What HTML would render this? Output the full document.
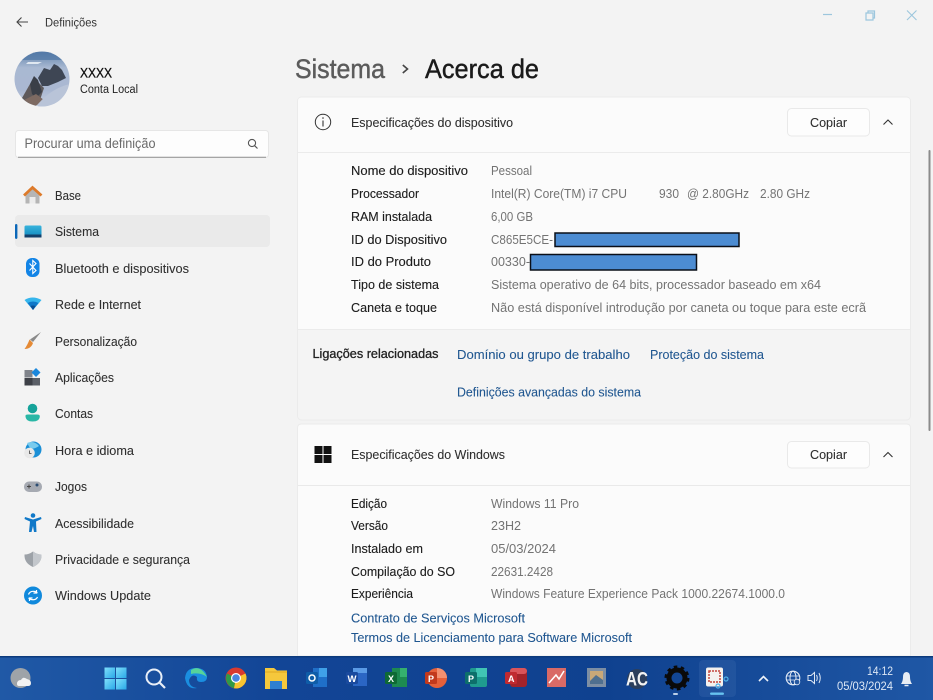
<!DOCTYPE html>
<html lang="pt"><head><meta charset="utf-8"><title>Definições</title>
<style>
html,body{margin:0;padding:0;background:#f3f3f3}
svg{display:block;width:933px;height:700px;filter:blur(.35px)}
text{font-family:"Liberation Sans",sans-serif;font-size:13px;fill:#2a2a2a}
.l{fill:#1c1c1c;stroke:#1c1c1c;stroke-width:.12}.v{fill:#737373}.a{fill:#1f5690;stroke:#1f5690;stroke-width:.08}.n{fill:#2e2e2e;stroke:#2e2e2e;stroke-width:.08}
</style></head><body>
<svg xmlns="http://www.w3.org/2000/svg" viewBox="0 0 933 700" width="933" height="700">
<defs>
<linearGradient id="tb" x1="0" x2="1" y1="0" y2="0"><stop offset="0" stop-color="#2059a6"/><stop offset=".3" stop-color="#124596"/><stop offset=".65" stop-color="#0f418f"/><stop offset="1" stop-color="#1f57a5"/></linearGradient>
<linearGradient id="sky" x1="0" x2="0" y1="0" y2="1"><stop offset="0" stop-color="#5c7fa9"/><stop offset=".3" stop-color="#a9b9d2"/><stop offset=".7" stop-color="#aab8d2"/><stop offset="1" stop-color="#c5cfe0"/></linearGradient>
<linearGradient id="scr" x1="0" x2="0" y1="0" y2="1"><stop offset="0" stop-color="#38b4dc"/><stop offset="1" stop-color="#0e86bd"/></linearGradient>
<linearGradient id="win" x1="0" x2="1" y1="0" y2="1"><stop offset="0" stop-color="#7fe0fb"/><stop offset="1" stop-color="#2aa8e8"/></linearGradient>
<clipPath id="av"><circle cx="42" cy="79" r="27.5"/></clipPath>
</defs>
<rect width="933" height="700" fill="#f3f3f3"/>

<!-- title bar -->
<path d="M28 22H17M21.500 17.500L17 22L21.500 26.500" fill="none" stroke="#444" stroke-width="1.100"/>
<text x="45" y="26.500" textLength="52" lengthAdjust="spacingAndGlyphs" style="font-size:11.500px;fill:#333">Definições</text>
<path d="M823 14.500H832" stroke="#9cc6dd" stroke-width="1.200"/>
<path d="M866 13h7v7h-7zM868 13v-2h6.500v7h-1.500" fill="none" stroke="#9cc6dd" stroke-width="1.200"/>
<path d="M907 10.500l9.500 9.500M916.500 10.500l-9.500 9.500" stroke="#9cc6dd" stroke-width="1.100"/>

<!-- profile -->
<g clip-path="url(#av)">
<rect x="14" y="51" width="56" height="56" fill="url(#sky)"/>
<path d="M14 60H70V52H14Z" fill="#4f76a5" opacity=".7"/>
<path d="M28 62H42L38 64H26Z" fill="#dfe7f0"/>
<path d="M38 78L44 68L50 70L54 64L58 66L62 70L66 78L58 82L48 86L42 86Z" fill="#3e4654"/>
<path d="M22 98L30 84L36 80L44 88L40 100L26 104Z" fill="#5e5a5c"/>
<path d="M30 84L34 76L38 80L42 92L36 98L32 94Z" fill="#3a3f48"/>
<path d="M24 100L36 94L44 100L34 107Z" fill="#7d6a62"/>
<path d="M38 104Q52 88 70 84V107H38Z" fill="#b9c4d8"/>
</g>
<text x="80" y="77.500" textLength="32" lengthAdjust="spacingAndGlyphs" style="font-size:14px;fill:#111;stroke:#111;stroke-width:.3">XXXX</text>
<text x="80" y="93" textLength="58" lengthAdjust="spacingAndGlyphs" style="font-size:11.500px;fill:#222">Conta Local</text>

<!-- search -->
<rect x="15.500" y="130.500" width="253" height="27" rx="3" fill="#fdfdfd" stroke="#e6e6e6"/>
<path d="M18 157.300H266" stroke="#8f8f8f" stroke-width="1"/>
<text x="24.500" y="148" textLength="131" lengthAdjust="spacingAndGlyphs" style="font-size:13.500px;fill:#6a6a6a">Procurar uma definição</text>
<circle cx="252" cy="143" r="3.600" fill="none" stroke="#555" stroke-width="1.100"/><path d="M254.600 145.700L257.500 148.500" stroke="#555" stroke-width="1.200"/>

<!-- nav -->
<rect x="15" y="215" width="255" height="32" rx="4" fill="#eaeaea"/>
<rect x="15" y="224" width="2.400" height="15" rx="1.200" fill="#0b67b8"/>
<text class="n" x="55" y="200" textLength="26" lengthAdjust="spacingAndGlyphs">Base</text>
<text class="n" x="55" y="236" textLength="44" lengthAdjust="spacingAndGlyphs">Sistema</text>
<text class="n" x="55" y="273" textLength="134" lengthAdjust="spacingAndGlyphs">Bluetooth e dispositivos</text>
<text class="n" x="55" y="309" textLength="86" lengthAdjust="spacingAndGlyphs">Rede e Internet</text>
<text class="n" x="55" y="346" textLength="82" lengthAdjust="spacingAndGlyphs">Personalização</text>
<text class="n" x="55" y="382" textLength="59" lengthAdjust="spacingAndGlyphs">Aplicações</text>
<text class="n" x="55" y="418" textLength="38" lengthAdjust="spacingAndGlyphs">Contas</text>
<text class="n" x="55" y="455" textLength="79" lengthAdjust="spacingAndGlyphs">Hora e idioma</text>
<text class="n" x="55" y="491" textLength="32" lengthAdjust="spacingAndGlyphs">Jogos</text>
<text class="n" x="55" y="528" textLength="79" lengthAdjust="spacingAndGlyphs">Acessibilidade</text>
<text class="n" x="55" y="564" textLength="135" lengthAdjust="spacingAndGlyphs">Privacidade e segurança</text>
<text class="n" x="55" y="600" textLength="96" lengthAdjust="spacingAndGlyphs">Windows Update</text>
<!-- nav icons -->
<path d="M25.500 194L32.500 188L39.500 194V203.500H25.500Z" fill="#b5b5b5"/><path d="M29.500 197H35.500V203.500H29.500Z" fill="#ececec"/>
<path d="M24 195.500L32.500 187.500L41.500 195.500" fill="none" stroke="#dd7a2a" stroke-width="2.800"/>
<rect x="24.500" y="225.500" width="17" height="12" rx="1.500" fill="url(#scr)"/><rect x="24.500" y="234.500" width="17" height="3" fill="#123f6a"/>
<rect x="26" y="258" width="13.500" height="19" rx="6" fill="#1284e6"/><path d="M29.500 263.500L36 270.500L32.800 273.500V260.500L36 263.500L29.500 270.500" fill="none" stroke="#fff" stroke-width="1.100"/>
<path d="M24.500 300Q32.500 295 41.500 300L33 310Z" fill="#35b5ec"/><path d="M27.500 303Q33 300 38.500 303L33 310Z" fill="#0f78c8"/><path d="M30.500 306Q33 305 35.500 306L33 310Z" fill="#0b4d91"/>
<path d="M41 332L33 342L30 339.500Z" fill="#8a8a8a"/><path d="M29.500 339.500L33 343Q31 349 24.500 349Q27.500 345 29.500 339.500Z" fill="#e58a35"/>
<rect x="24.500" y="370" width="8" height="7.500" fill="#80848b"/><rect x="24.500" y="378" width="8" height="7.500" fill="#3d4047"/><rect x="32.500" y="378" width="7.500" height="7.500" fill="#5c6068"/><path d="M36 368L40.500 372.500L36 377L31.500 372.500Z" fill="#1b87dc"/>
<circle cx="32.500" cy="408.500" r="4.800" fill="#15a39a"/><path d="M25.500 416.500Q25 414.500 28 414.500H37Q40 414.500 39.800 416.500Q39.500 421.500 32.500 421.500Q26 421.500 25.500 416.500Z" fill="#2ab7a6"/>
<circle cx="33.500" cy="449.500" r="8" fill="#1b8fd6"/><path d="M27 443Q34 440 39 446Q33 450 30 448Z" fill="#79cbee"/><circle cx="29.500" cy="453" r="5.300" fill="#e8e8e8"/><path d="M29.500 450.500V453.500H31.500" fill="none" stroke="#444" stroke-width=".8"/>
<rect x="24" y="481.500" width="18" height="10.500" rx="5" fill="#a6aab2"/><circle cx="37" cy="485" r="1.500" fill="#2c4d73"/><path d="M27 486.500H31M29 484.500V488.500" stroke="#444" stroke-width="1"/>
<g fill="#0f78c8"><circle cx="33" cy="515.500" r="2.300"/><path d="M25 517L33 519.500L41 517L41.500 519L36 521.500L36.500 532H34L33 526L31.500 532H29L30 521.500L24.500 519Z"/></g>
<path d="M33 551.500Q37 554.500 41.500 554.500Q42 563 33 567Q24 563 24.500 554.500Q29 554.500 33 551.500Z" fill="#9da2a8"/><path d="M33 551.500Q37 554.500 41.500 554.500Q42 563 33 567Z" fill="#c3c7cc"/>
<circle cx="33" cy="595.500" r="9" fill="#1089dc"/><path d="M28.500 594.500Q30 590.500 35 591.500L37.500 593M36.500 590V593H33.500M37.500 597Q36 600.500 31 599.500L28.500 598M29.500 601V598H32.500" fill="none" stroke="#fff" stroke-width="1.200"/>

<!-- heading -->
<text x="295" y="78" textLength="90" lengthAdjust="spacingAndGlyphs" style="font-size:27px;fill:#5b5b5b;stroke:#5b5b5b;stroke-width:.45">Sistema</text>
<path d="M402.800 65L407.500 69L402.800 73" fill="none" stroke="#444" stroke-width="1.600"/>
<text x="425" y="78" textLength="114" lengthAdjust="spacingAndGlyphs" style="font-size:27px;fill:#1a1a1a;stroke:#1a1a1a;stroke-width:.45">Acerca de</text>

<!-- card 1 -->
<rect x="297.500" y="97" width="613" height="323" rx="4" fill="#f4f4f4" stroke="#ebebeb"/>
<path d="M298 329V101Q298 97.500 302 97.500H906Q910 97.500 910 101V329Z" fill="#fbfbfb"/>
<path d="M298 152.500H910" stroke="#ebebeb"/>
<path d="M298 329.500H910" stroke="#ebebeb"/>
<circle cx="323" cy="122" r="7.700" fill="none" stroke="#333" stroke-width="1"/>
<path d="M323 120.500V126.500" stroke="#333" stroke-width="1.100"/><circle cx="323" cy="118" r=".8" fill="#333"/>
<text class="n" x="351" y="127" textLength="162" lengthAdjust="spacingAndGlyphs">Especificações do dispositivo</text>
<rect x="787.500" y="108.500" width="82" height="27.500" rx="4" fill="#fdfdfd" stroke="#e9e9e9"/>
<text class="n" x="810" y="127" textLength="37" lengthAdjust="spacingAndGlyphs">Copiar</text>
<path d="M883.500 124.500L888 120L892.500 124.500" fill="none" stroke="#333" stroke-width="1.100"/>

<text class="l" x="351" y="175" textLength="117" lengthAdjust="spacingAndGlyphs">Nome do dispositivo</text>
<text class="l" x="351" y="198" textLength="68" lengthAdjust="spacingAndGlyphs">Processador</text>
<text class="l" x="351" y="221" textLength="81" lengthAdjust="spacingAndGlyphs">RAM instalada</text>
<text class="l" x="351" y="244" textLength="96" lengthAdjust="spacingAndGlyphs">ID do Dispositivo</text>
<text class="l" x="351" y="266" textLength="80" lengthAdjust="spacingAndGlyphs">ID do Produto</text>
<text class="l" x="351" y="289" textLength="88" lengthAdjust="spacingAndGlyphs">Tipo de sistema</text>
<text class="l" x="351" y="312" textLength="86" lengthAdjust="spacingAndGlyphs">Caneta e toque</text>
<text class="v" x="491" y="175" textLength="41" lengthAdjust="spacingAndGlyphs">Pessoal</text>
<text class="v" x="491" y="198" textLength="136" lengthAdjust="spacingAndGlyphs">Intel(R) Core(TM) i7 CPU</text>
<text class="v" x="659" y="198" textLength="20" lengthAdjust="spacingAndGlyphs">930</text>
<text class="v" x="687" y="198" textLength="62" lengthAdjust="spacingAndGlyphs">@ 2.80GHz</text>
<text class="v" x="760" y="198" textLength="50" lengthAdjust="spacingAndGlyphs">2.80 GHz</text>
<text class="v" x="491" y="221" textLength="42" lengthAdjust="spacingAndGlyphs">6,00 GB</text>
<text class="v" x="491" y="244" textLength="62" lengthAdjust="spacingAndGlyphs">C865E5CE-</text>
<text class="v" x="491" y="266" textLength="39" lengthAdjust="spacingAndGlyphs">00330-</text>
<text class="v" x="491" y="289" textLength="330" lengthAdjust="spacingAndGlyphs">Sistema operativo de 64 bits, processador baseado em x64</text>
<text class="v" x="491" y="312" textLength="375" lengthAdjust="spacingAndGlyphs">Não está disponível introdução por caneta ou toque para este ecrã</text>
<rect x="555" y="233" width="184" height="13.500" fill="#4c8cd2" stroke="#0a0f18" stroke-width="1.500"/>
<rect x="530.500" y="254.500" width="166" height="15.500" fill="#4c8cd2" stroke="#0a0f18" stroke-width="1.500"/>

<text x="312.500" y="358" textLength="126" lengthAdjust="spacingAndGlyphs" style="fill:#222;stroke:#222;stroke-width:.3">Ligações relacionadas</text>
<text class="a" x="457" y="359" textLength="173" lengthAdjust="spacingAndGlyphs">Domínio ou grupo de trabalho</text>
<text class="a" x="650" y="359" textLength="114" lengthAdjust="spacingAndGlyphs">Proteção do sistema</text>
<text class="a" x="457" y="396.500" textLength="184" lengthAdjust="spacingAndGlyphs">Definições avançadas do sistema</text>

<!-- card 2 -->
<path d="M297.500 656V428Q297.500 424 301.500 424H906.500Q910.500 424 910.500 428V656Z" fill="#fbfbfb" stroke="#ebebeb"/>
<path d="M298 485.500H910" stroke="#e9e9e9"/>
<g fill="#111"><rect x="314.500" y="446" width="8" height="8"/><rect x="323.500" y="446" width="8" height="8"/><rect x="314.500" y="455" width="8" height="8"/><rect x="323.500" y="455" width="8" height="8"/></g>
<text class="n" x="351" y="459" textLength="154" lengthAdjust="spacingAndGlyphs">Especificações do Windows</text>
<rect x="787.500" y="441.500" width="82" height="26.500" rx="4" fill="#fdfdfd" stroke="#e9e9e9"/>
<text class="n" x="810" y="459" textLength="37" lengthAdjust="spacingAndGlyphs">Copiar</text>
<path d="M883.500 457L888 452.500L892.500 457" fill="none" stroke="#333" stroke-width="1.100"/>

<text class="l" x="351" y="508" textLength="36" lengthAdjust="spacingAndGlyphs">Edição</text>
<text class="l" x="351" y="530" textLength="37" lengthAdjust="spacingAndGlyphs">Versão</text>
<text class="l" x="351" y="553" textLength="72" lengthAdjust="spacingAndGlyphs">Instalado em</text>
<text class="l" x="351" y="576" textLength="104" lengthAdjust="spacingAndGlyphs">Compilação do SO</text>
<text class="l" x="351" y="598" textLength="62" lengthAdjust="spacingAndGlyphs">Experiência</text>
<text class="v" x="491" y="508" textLength="88" lengthAdjust="spacingAndGlyphs">Windows 11 Pro</text>
<text class="v" x="491" y="530" textLength="30" lengthAdjust="spacingAndGlyphs">23H2</text>
<text class="v" x="491" y="553" textLength="65" lengthAdjust="spacingAndGlyphs">05/03/2024</text>
<text class="v" x="491" y="576" textLength="62" lengthAdjust="spacingAndGlyphs">22631.2428</text>
<text class="v" x="491" y="598" textLength="294" lengthAdjust="spacingAndGlyphs">Windows Feature Experience Pack 1000.22674.1000.0</text>
<text class="a" x="351" y="622.500" textLength="174" lengthAdjust="spacingAndGlyphs">Contrato de Serviços Microsoft</text>
<text class="a" x="351" y="642" textLength="281" lengthAdjust="spacingAndGlyphs">Termos de Licenciamento para Software Microsoft</text>

<!-- scrollbar -->
<rect x="928.500" y="150" width="2" height="281" rx="1" fill="#8b8b8b"/>

<!-- taskbar -->
<rect y="656" width="933" height="44" fill="url(#tb)"/>
<rect y="656" width="933" height="1.500" fill="#0c3a7c"/>
<rect x="699" y="660" width="37" height="37" rx="4" fill="#2d5ea6" opacity=".5"/>

<circle cx="20.500" cy="678" r="10" fill="#9ea3a8"/><path d="M17 684Q17 680 21 680Q23 676 27 679Q31 680 31 683Q31 686 28 686H19Q17 686 17 684Z" fill="#f2f2f2"/>
<g fill="url(#win)"><rect x="104.500" y="667.500" width="10.500" height="10.500"/><rect x="116" y="667.500" width="10.500" height="10.500"/><rect x="104.500" y="679" width="10.500" height="10.500"/><rect x="116" y="679" width="10.500" height="10.500"/></g>
<circle cx="154" cy="677" r="7.500" fill="none" stroke="#e8eef7" stroke-width="2"/><path d="M159.500 682.500L165 688" stroke="#e8eef7" stroke-width="2.200"/>
<path d="M185 678Q186 668 196 668Q206 668 207 677Q207 682 201 682Q196 682 197 677Q192 673 189 680Q189 687 197 688Q187 690 185 678Z" fill="#1a8ee0"/><path d="M191 670Q200 664 207 677Q200 672 191 674Z" fill="#56d39a"/>
<circle cx="236" cy="678" r="10.500" fill="#d83a2f"/><path d="M236 678L227 673.500A10.500 10.500 0 0 0 234 688.300Z" fill="#2f9a47"/><path d="M236 678L245.500 673.500A10.500 10.500 0 0 1 234 688.300Z" fill="#f7c431"/><circle cx="236" cy="678" r="5" fill="#fff"/><circle cx="236" cy="678" r="3.800" fill="#4a86e0"/>
<path d="M265 668H274L277 670.500H287V689H265Z" fill="#f5c83c"/><rect x="270" y="681" width="12" height="8" fill="#2f7fd0"/><path d="M265 672H287" stroke="#e0a820"/>
<rect x="313" y="668" width="14" height="19" fill="#1f6fc8"/><rect x="319" y="668" width="8" height="9" fill="#3fa0e8"/><rect x="306" y="672" width="12" height="12" rx="1.500" fill="#0f5da8"/><circle cx="312" cy="678" r="3" fill="none" stroke="#fff" stroke-width="1.500"/>
<rect x="353" y="668" width="14" height="18" fill="#2b66c4"/><rect x="353" y="668" width="14" height="5" fill="#5a9be6"/><rect x="346" y="672" width="12" height="12" rx="1.500" fill="#1a4a9e"/><text x="347.500" y="682" textLength="9" lengthAdjust="spacingAndGlyphs" style="font-size:9px;font-weight:bold;fill:#fff">W</text>
<rect x="392" y="668" width="15" height="19" fill="#1d8a50"/><rect x="400" y="668" width="7" height="9" fill="#35b06e"/><rect x="385" y="672" width="12" height="12" rx="1.500" fill="#0e6a35"/><text x="388" y="682" style="font-size:9px;font-weight:bold;fill:#fff">X</text>
<circle cx="437" cy="678" r="10" fill="#e5603a"/><path d="M437 678V668A10 10 0 0 1 447 678Z" fill="#f29070"/><rect x="425" y="672" width="12" height="12" rx="1.500" fill="#c2391c"/><text x="428" y="682" style="font-size:9px;font-weight:bold;fill:#fff">P</text>
<rect x="470" y="668" width="17" height="19" rx="2" fill="#1f9b8f"/><rect x="476" y="668" width="11" height="9" fill="#40c4b4"/><rect x="465" y="672" width="12" height="12" rx="1.500" fill="#0d6f6b"/><text x="468" y="682" style="font-size:9px;font-weight:bold;fill:#fff">P</text>
<rect x="510" y="668" width="17" height="19" rx="3" fill="#a3232a"/><rect x="510" y="668" width="17" height="6" rx="3" fill="#d9545a"/><rect x="505" y="672" width="12" height="12" rx="1.500" fill="#c12a30"/><text x="508" y="682" style="font-size:9px;font-weight:bold;fill:#fff">A</text>
<rect x="547" y="668" width="19" height="19" fill="#d96a66"/><path d="M549 683L556 675L559 679L564 671" fill="none" stroke="#fff" stroke-width="1.500"/>
<rect x="587" y="668" width="19" height="19" fill="#7d8ea3"/><rect x="590" y="671" width="13" height="13" fill="#c9a878"/><path d="M590 681L596 675L603 680V684H590Z" fill="#4f6f8f"/>
<circle cx="637" cy="679" r="10" fill="#2c3f5c"/><text x="626" y="685.500" textLength="22" lengthAdjust="spacingAndGlyphs" style="font-size:19px;font-weight:bold;fill:#f2f2f2">AC</text>
<circle cx="677" cy="678" r="8" fill="none" stroke="#0a0a0a" stroke-width="5"/><circle cx="677" cy="678" r="11" fill="none" stroke="#0a0a0a" stroke-width="3" stroke-dasharray="3.500 3.400"/>
<rect x="673" y="693" width="5" height="2" rx="1" fill="#bcd0e8"/>
<rect x="706" y="667.500" width="17" height="19" rx="2" fill="#f4f1ee"/><rect x="709" y="671" width="11" height="11" fill="none" stroke="#c4453c" stroke-width="1.500" stroke-dasharray="2 1"/>
<circle cx="726" cy="679" r="2" fill="none" stroke="#4fb0e8" stroke-width="1.200"/><circle cx="718" cy="686" r="2" fill="none" stroke="#4fb0e8" stroke-width="1.200"/>
<rect x="710" y="692.500" width="14" height="2.400" rx="1.200" fill="#66c2ef"/>
<path d="M759 681L763.500 676.500L768 681" fill="none" stroke="#eef3fa" stroke-width="1.600"/>
<circle cx="793" cy="678" r="6.800" fill="none" stroke="#e5ecf6" stroke-width="1.100"/><ellipse cx="793" cy="678" rx="3" ry="6.800" fill="none" stroke="#e5ecf6"/><path d="M786.500 676H799.500M786.500 680H799.500" stroke="#e5ecf6" stroke-width=".8"/><circle cx="797" cy="682" r="2.800" fill="#2658a0" stroke="#e5ecf6" stroke-width=".8"/>
<path d="M808 675.500H811L814.500 672.500V683.500L811 680.500H808Z" fill="none" stroke="#dfe8f4"/><path d="M816.500 675Q818 678 816.500 681M819 673Q821.500 678 819 683" fill="none" stroke="#dfe8f4"/>
<text x="867" y="675" textLength="26" lengthAdjust="spacingAndGlyphs" style="font-size:11.500px;fill:#dce7f5">14:12</text>
<text x="837" y="690" textLength="56" lengthAdjust="spacingAndGlyphs" style="font-size:11.500px;fill:#dce7f5">05/03/2024</text>
<path d="M901 684Q903 681 903 677Q903 672 906.500 672Q910 672 910 677Q910 681 912 684Z" fill="#e8edf4"/><path d="M904.500 685.500H908.500" stroke="#e8edf4" stroke-width="1.500"/>
</svg>
</body></html>
